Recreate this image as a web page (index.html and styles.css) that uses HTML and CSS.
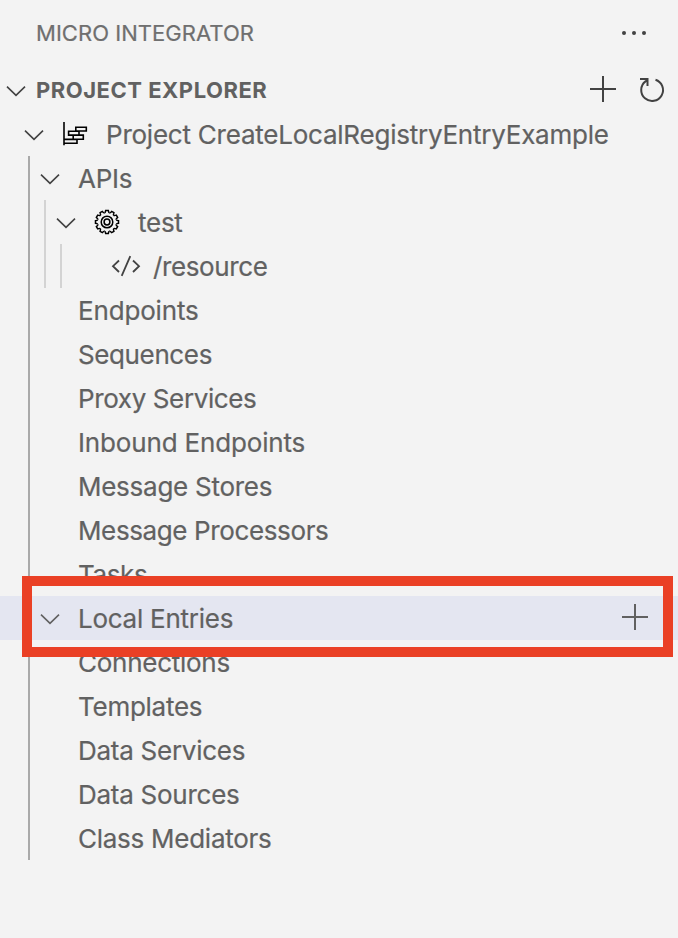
FILE: index.html
```html
<!DOCTYPE html>
<html lang="en">
<head>
<meta charset="utf-8">
<title>Micro Integrator</title>
<link rel="stylesheet" href="styles.css">
</head>
<body>
<svg width="0" height="0" class="defs" aria-hidden="true">
  <symbol id="chevron" viewBox="0 0 32 44"><path d="M7 18.6 16 27.3 25 18.6"/></symbol>
  <symbol id="plus" viewBox="0 0 32 44"><path d="M3 21H29M16 8V34"/></symbol>
  <path id="tooth" d="M-2.5-9.2Q-1.7-9.3-1.3-11.5H1.3Q1.7-9.3 2.5-9.2"/>
</svg>
<div class="sidebar">
  <header class="titlebar">
    <h1 class="title">MICRO INTEGRATOR</h1>
    <svg class="more" viewBox="0 0 32 32"><circle cx="6" cy="16" r="2"/><circle cx="16" cy="16" r="2"/><circle cx="26" cy="16" r="2"/></svg>
  </header>
  <div class="section">
    <svg class="icon"><use href="#chevron"/></svg>
    <h2 class="section-title">PROJECT EXPLORER</h2>
    <svg class="icon add"><use href="#plus"/></svg>
    <svg class="refresh" viewBox="0 0 32 44"><path d="M19.5 11.7A10.9 10.9 0 1 1 9.5 13.4L11.5 11.6M4 11H11.5V18"/></svg>
  </div>
  <div class="tree">
    <div class="row level-0">
      <svg class="icon"><use href="#chevron"/></svg>
      <svg class="project-icon" viewBox="0 0 26 26"><path d="M2 1V24.3M13.8 6.3H24.3V10H13.8ZM6.6 10.2H17V14.1H6.6ZM11.2 14.1H21.3V18.2H11.2ZM2 18.4H15V22.2H2"/></svg>
      <span class="label project">Project CreateLocalRegistryEntryExample</span>
    </div>
    <div class="children">
      <div class="row level-1"><svg class="icon"><use href="#chevron"/></svg><span class="label">APIs</span></div>
      <div class="children nested">
        <div class="row level-2">
          <svg class="icon"><use href="#chevron"/></svg>
          <svg class="gear" viewBox="-13 -13 26 26"><use href="#tooth"/><use href="#tooth" transform="rotate(30)"/><use href="#tooth" transform="rotate(60)"/><use href="#tooth" transform="rotate(90)"/><use href="#tooth" transform="rotate(120)"/><use href="#tooth" transform="rotate(150)"/><use href="#tooth" transform="rotate(180)"/><use href="#tooth" transform="rotate(210)"/><use href="#tooth" transform="rotate(240)"/><use href="#tooth" transform="rotate(270)"/><use href="#tooth" transform="rotate(300)"/><use href="#tooth" transform="rotate(330)"/><circle r="5.8"/><circle r="2.9"/></svg>
          <span class="label">test</span>
        </div>
        <div class="children nested">
          <div class="row level-3">
            <svg class="code" viewBox="0 0 30 24"><path d="M8 6.5 2 12.2 8 18M22 6.5 28 12.2 22 18M19.3 2.2 10.7 21.8"/></svg>
            <span class="label tight">/resource</span>
          </div>
        </div>
      </div>
      <div class="row leaf"><span class="label loose">Endpoints</span></div>
      <div class="row leaf"><span class="label tight">Sequences</span></div>
      <div class="row leaf"><span class="label tight">Proxy Services</span></div>
      <div class="row leaf"><span class="label loose">Inbound Endpoints</span></div>
      <div class="row leaf"><span class="label">Message Stores</span></div>
      <div class="row leaf"><span class="label tight">Message Processors</span></div>
      <div class="row leaf"><span class="label tight">Tasks</span></div>
      <div class="row level-1 selected">
        <svg class="icon"><use href="#chevron"/></svg><span class="label">Local Entries</span>
        <svg class="icon add"><use href="#plus"/></svg>
        <div class="highlight"></div>
      </div>
      <div class="row leaf"><span class="label">Connections</span></div>
      <div class="row leaf"><span class="label">Templates</span></div>
      <div class="row leaf"><span class="label">Data Services</span></div>
      <div class="row leaf"><span class="label">Data Sources</span></div>
      <div class="row leaf"><span class="label">Class Mediators</span></div>
    </div>
  </div>
</div>
</body>
</html>
```
FILE: styles.css
```css
* { box-sizing: border-box; }
body { margin: 0; background: #f3f3f3; color: #616161; font-family: Inter, "Liberation Sans", sans-serif; }
.defs { position: absolute; }
svg { flex: none; fill: none; stroke: #424242; stroke-width: 1.6; }
.sidebar { width: 678px; height: 938px; overflow: hidden; }
.titlebar { display: flex; align-items: center; height: 68px; padding: 0 28px 2px 36px; }
.title { margin: 0; font-size: 22px; font-weight: 400; color: #6f6f6f; letter-spacing: 0.04px; -webkit-text-stroke: 0.2px; }
.more { width: 32px; height: 32px; margin-left: auto; fill: #424242; stroke: none; }
.section { display: flex; align-items: center; height: 44px; padding-right: 10px; }
.section-title { margin: 0; padding-left: 4px; font-size: 22px; font-weight: 700; letter-spacing: 0.52px; }
.icon { width: 32px; height: 44px; }
.add { margin-left: auto; stroke-width: 2; }
.refresh { width: 32px; height: 44px; margin-left: 17px; stroke-width: 2; }
.tree { font-size: 26px; letter-spacing: -0.26px; -webkit-text-stroke: 0.2px; }
.row { display: flex; align-items: center; height: 44px; white-space: nowrap; }
.label { line-height: 44px; padding-top: 2px; }
.project { padding-left: 18px; letter-spacing: -0.23px; }
.tight { letter-spacing: -0.38px; }
.loose { letter-spacing: -0.16px; }
.children { background: linear-gradient(#a9a9a9, #a9a9a9) 28px 0 / 2px 100% no-repeat; }
.children.nested { background-image: linear-gradient(#d3d3d3, #d3d3d3); background-position: 44px 0; }
.children.nested .nested { background-position: 60px 0; }
.level-0 { padding-left: 18px; }
.level-1 { padding-left: 34px; }
.level-1 .label { padding-left: 12px; }
.level-2 { padding-left: 50px; }
.level-2 .label { padding-left: 18px; }
.level-3 { padding-left: 111px; }
.level-3 .label { padding-left: 12px; }
.leaf { padding-left: 78px; }
.project-icon { width: 26px; height: 26px; margin-left: 12px; stroke: #000; }
.gear { width: 26px; height: 26px; margin-left: 12px; stroke: #000; stroke-width: 1.5; }
.code { width: 30px; height: 24px; stroke-width: 1.8; }
.selected { position: relative; background: #e4e6f1; padding-right: 27px; }
.selected .icon { stroke: #616161; }
.highlight { position: absolute; left: 22px; top: -20px; width: 651px; height: 81px; border: 10px solid #ea4025; z-index: 1; }
```
